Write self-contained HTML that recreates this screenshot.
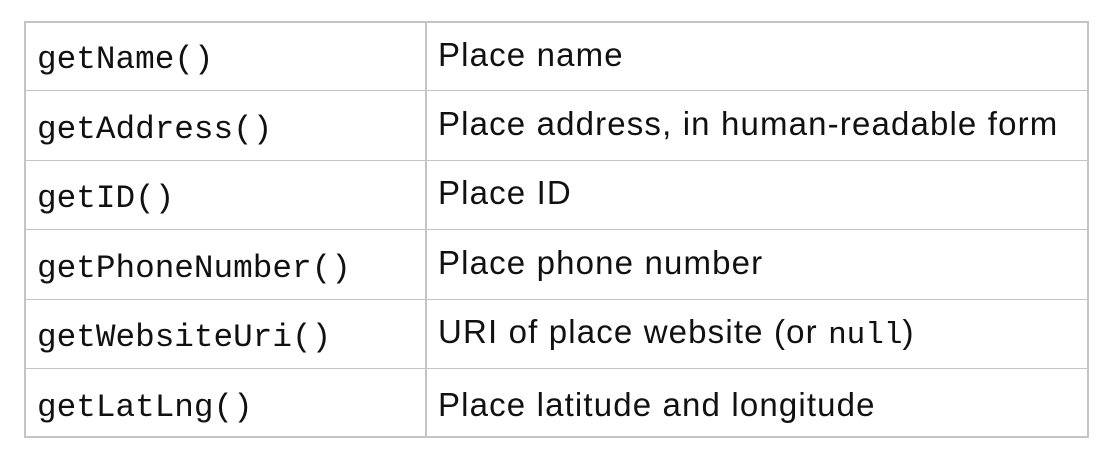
<!DOCTYPE html>
<html><head><style>
body{margin:0;background:#fff;width:1116px;height:457px;position:relative;overflow:hidden}
.t{position:absolute;left:24px;top:21px;width:1065px;height:417px;box-sizing:border-box;border:2px solid #c4c4c4;border-top-width:2px}
.h{position:absolute;left:24px;width:1065px;height:1px;background:#c4c4c4}
.v{position:absolute;left:425px;top:21px;width:2px;height:417px;background:#c4c4c4}
.m{position:absolute;left:37px;font-family:"Liberation Mono",monospace;font-size:32.7px;color:#111;line-height:1}
.s{position:absolute;left:438px;font-family:"Liberation Sans",sans-serif;font-size:33px;color:#111;line-height:1;letter-spacing:1.15px}
.s code{font-family:"Liberation Mono",monospace;font-size:31px;letter-spacing:0}
</style></head><body>
<div class="t"></div>
<div class="h" style="top:90px"></div>
<div class="h" style="top:160px"></div>
<div class="h" style="top:229px"></div>
<div class="h" style="top:299px"></div>
<div class="h" style="top:368px"></div>
<div class="v"></div>
<div class="m" style="top:44px">getName()</div>
<div class="s" style="top:38px">Place name</div>
<div class="m" style="top:114px">getAddress()</div>
<div class="s" style="top:107px">Place address, in human-readable form</div>
<div class="m" style="top:183px">getID()</div>
<div class="s" style="top:176px">Place ID</div>
<div class="m" style="top:253px">getPhoneNumber()</div>
<div class="s" style="top:246px">Place phone number</div>
<div class="m" style="top:322px">getWebsiteUri()</div>
<div class="s" style="top:315px">URI of place website (or <code>null</code>)</div>
<div class="m" style="top:392px">getLatLng()</div>
<div class="s" style="top:388px">Place latitude and longitude</div>
</body></html>
